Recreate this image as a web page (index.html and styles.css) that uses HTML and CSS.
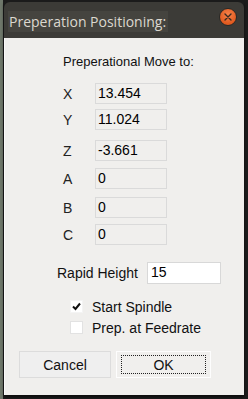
FILE: index.html
```html
<!DOCTYPE html>
<html>
<head>
<meta charset="utf-8">
<link rel="stylesheet" href="styles.css">
</head>
<body>
<div class="win">
  <div class="titlebar">
    <span class="title">Preperation Positioning:</span>
    <span class="close"><svg width="8" height="8" viewBox="0 0 8 8"><path d="M1 1L7 7M7 1L1 7" stroke="#3a2a20" stroke-width="1.4" stroke-linecap="round"/></svg></span>
  </div>
  <div class="content">
    <div class="heading">Preperational Move to:</div>
    <div class="axes">
      <div class="row"><span class="lbl">X</span><span class="field">13.454</span></div>
      <div class="row"><span class="lbl">Y</span><span class="field">11.024</span></div>
      <div class="row"><span class="lbl">Z</span><span class="field">-3.661</span></div>
      <div class="row"><span class="lbl">A</span><span class="field">0</span></div>
      <div class="row"><span class="lbl">B</span><span class="field">0</span></div>
      <div class="row"><span class="lbl">C</span><span class="field">0</span></div>
    </div>
    <div class="rapid"><span class="rlbl">Rapid Height</span><span class="rfield">15</span></div>
    <div class="checks">
      <div class="chk"><span class="box"><svg width="9" height="9" viewBox="0 0 9 9"><path d="M1 4.5L3.5 7L8 1.5" fill="none" stroke="#111" stroke-width="2"/></svg></span><span>Start Spindle</span></div>
      <div class="chk"><span class="box empty"></span><span>Prep. at Feedrate</span></div>
    </div>
    <div class="buttons">
      <div class="btn cancel">Cancel</div>
      <div class="btn ok"><span class="focus">OK</span></div>
    </div>
  </div>
</div>
</body>
</html>
```
FILE: styles.css
```css
html, body {
  margin: 0;
  padding: 0;
}
body {
  width: 248px;
  height: 399px;
  overflow: hidden;
  background: linear-gradient(to right, #6f786b 0, #6f786b 3px, #1c1c1c 3px);
  font-family: "Liberation Sans", Arial, sans-serif;
  font-size: 13px;
  color: #000;
}
.win {
  margin: 2px 0 0 4px;
  width: 240px;
  height: 393px;
  display: flex;
  flex-direction: column;
  box-shadow: 0 2px 3px rgba(0,0,0,0.6);
}
.titlebar {
  height: 36px;
  background: #3c3b37;
  border-radius: 6px 6px 0 0;
  display: flex;
  align-items: flex-start;
  justify-content: space-between;
  padding: 0 7px 0 4px;
  box-sizing: border-box;
}
.title {
  font-family: "Open Sans", "DejaVu Sans", sans-serif;
  font-size: 14px;
  color: #dcd8cf;
  background: #45443f;
  padding: 0 2px 0 1px;
  line-height: 21px;
  margin-top: 9px;
}
.close {
  width: 16px;
  height: 16px;
  border-radius: 50%;
  background: radial-gradient(circle at 50% 35%, #f7824a, #e05a1f 70%);
  border: 1px solid #2a2926;
  display: flex;
  align-items: center;
  justify-content: center;
  margin-top: 6px;
}
.content {
  flex: 1;
  background: #f0efed;
  display: flex;
  flex-direction: column;
  border-left: 1px solid #fafafa;
}
.heading {
  margin: 16px 0 0 58px;
  line-height: 16px;
  color: #111;
}
.axes {
  margin: 13px 0 0 58px;
  display: flex;
  flex-direction: column;
}
.row {
  display: flex;
  align-items: center;
  height: 21px;
}
.row:nth-child(2) { margin-top: 5px; }
.row:nth-child(3) { margin-top: 10px; }
.row:nth-child(4) { margin-top: 7px; }
.row:nth-child(5) { margin-top: 8px; }
.row:nth-child(6) { margin-top: 6px; }
.lbl {
  width: 32px;
  font-size: 14px;
  color: #222;
}
.field {
  width: 72px;
  height: 21px;
  box-sizing: border-box;
  border: 1px solid #dadada;
  background: #f0efed;
  padding: 2px 0 0 2px;
  line-height: 15px;
  font-size: 14px;
}
.rapid {
  margin: 17px 0 0 52px;
  display: flex;
  align-items: center;
  height: 22px;
}
.rlbl {
  width: 90px;
  font-size: 14px;
  color: #111;
}
.rfield {
  width: 74px;
  height: 22px;
  box-sizing: border-box;
  border: 1px solid #d8d8d8;
  background: #fff;
  padding: 2px 0 0 3px;
  line-height: 15px;
  font-size: 14px;
}
.checks {
  margin: 16px 0 0 65px;
  display: flex;
  flex-direction: column;
  gap: 8px;
}
.chk {
  display: flex;
  align-items: center;
  height: 13px;
  gap: 9px;
  font-size: 14px;
  color: #111;
}
.box {
  width: 13px;
  height: 13px;
  box-sizing: border-box;
  background: #fff;
  border: 1px solid #f4f4f4;
  display: flex;
  align-items: center;
  justify-content: center;
}
.box.empty {
  border-color: #e2e2e2;
}
.buttons {
  margin: 17px 0 0 14px;
  display: flex;
  gap: 5px;
}
.btn {
  height: 27px;
  box-sizing: border-box;
  display: flex;
  align-items: center;
  justify-content: center;
  font-size: 14px;
  color: #111;
}
.cancel {
  width: 92px;
  border: 1px solid #dcdcdc;
  background: #efefef;
}
.ok {
  width: 95px;
  border: 1px solid #fdfdfd;
  background: #f0efed;
  padding: 3px 4px;
}
.focus {
  flex: 1;
  align-self: stretch;
  border: 1px dotted #222;
  display: flex;
  align-items: center;
  justify-content: center;
}
```
